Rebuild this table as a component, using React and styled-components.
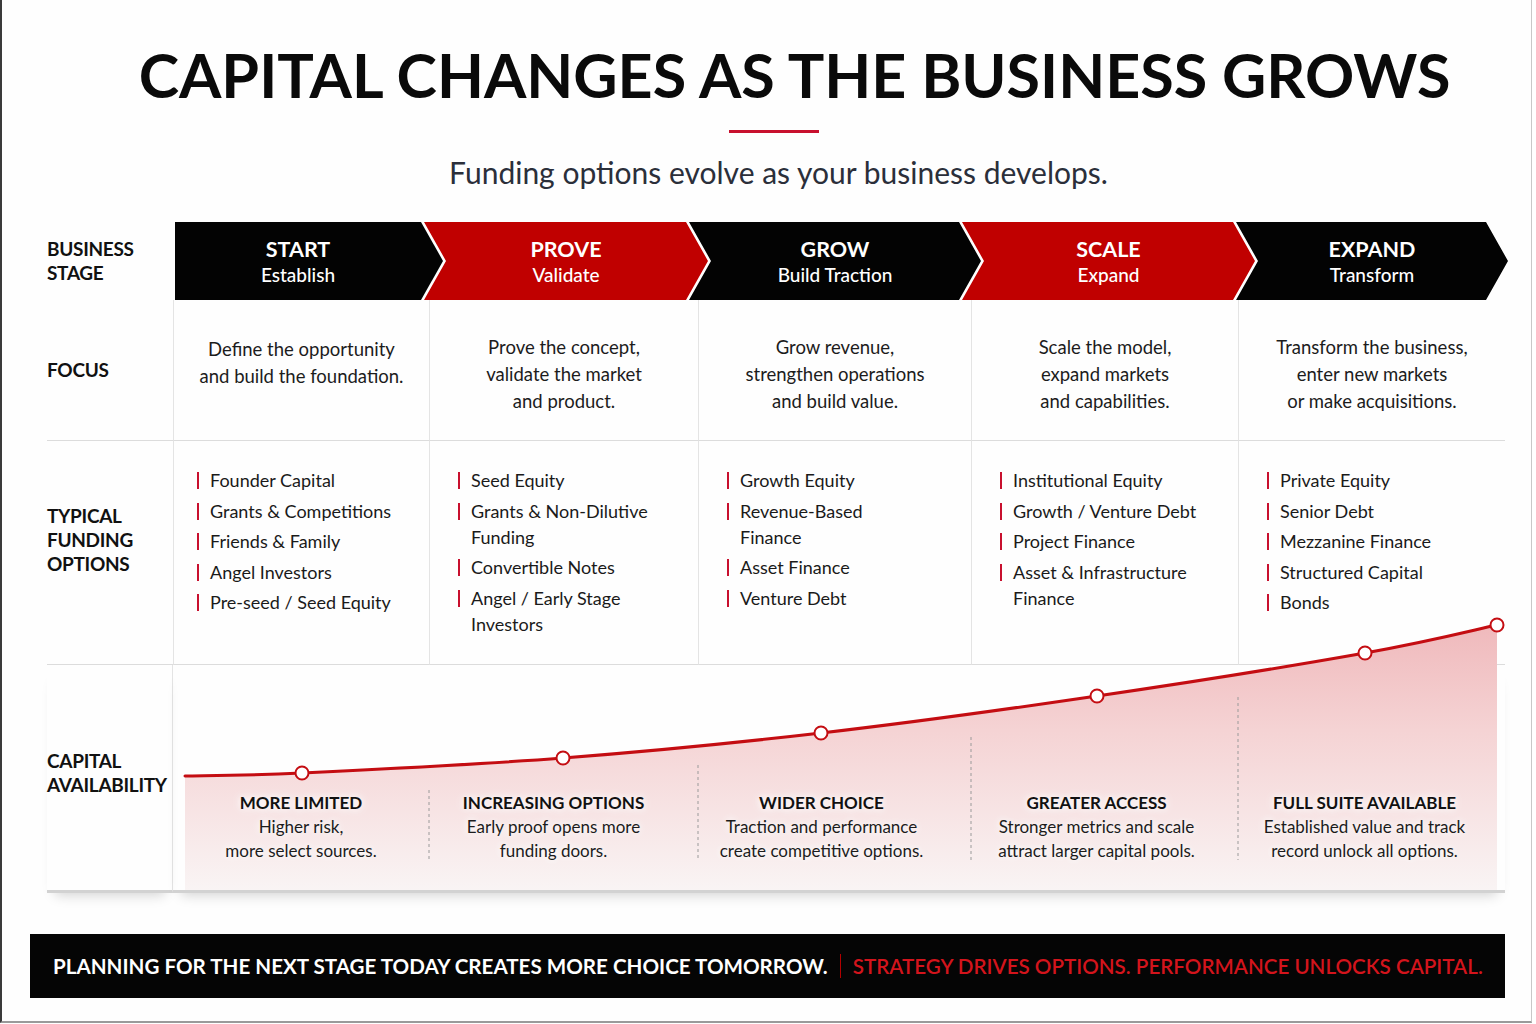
import React from 'react';
import styled, { createGlobalStyle } from 'styled-components';

const GlobalStyle = createGlobalStyle`
  html, body {
    margin: 0;
    padding: 0;
    background: #ffffff;
  }
  body {
    font-family: Lato, "Noto Sans", sans-serif;
    color: #111;
  }
`;

const RED = '#c8102e';

const Frame = styled.div`
  box-sizing: border-box;
  width: 1532px;
  height: 1023px;
  border-left: 2px solid #3a3a3a;
  border-right: 1px solid #c8c8c8;
  border-bottom: 2px solid #9a9a9a;
  background: #fefefe;
  padding-top: 38px;
  display: flex;
  flex-direction: column;
`;

const Header = styled.header`
  display: flex;
  flex-direction: column;
  align-items: center;
`;

const Title = styled.h1`
  margin: 0;
  padding-left: 56px;
  font-size: 61px;
  line-height: 73px;
  font-weight: 700;
  color: #0a0a0a;
  white-space: nowrap;
`;

const Rule = styled.div`
  width: 90px;
  height: 3px;
  background: ${RED};
  margin: 19px 0 0 14px;
`;

const Subtitle = styled.p`
  margin: 21px 0 0 24px;
  font-size: 30px;
  line-height: 36px;
  color: #2b2f3a;
`;

const Table = styled.div`
  display: grid;
  grid-template-columns: 126px 256px 269px 273px 267px 267px;
  grid-template-rows: 78px 141px 224px 228px;
  width: 1458px;
  margin: 32px 0 0 45px;
`;

const RowLabel = styled.div`
  box-sizing: border-box;
  display: flex;
  align-items: center;
  font-size: 19px;
  font-weight: 700;
  line-height: 24px;
  letter-spacing: -0.3px;
  color: #111;
  padding-bottom: ${(p) => p.$lift || 0}px;
  border-bottom: ${(p) => p.$line || 'none'};
  border-right: ${(p) => (p.$divider ? '1px solid #e4e4e4' : 'none')};
  box-shadow: ${(p) => (p.$shadow ? '0 10px 12px -8px rgba(0,0,0,0.18)' : 'none')};
`;

const StageStrip = styled.div`
  grid-column: 2 / -1;
  display: flex;
  padding-left: 2px;
`;

const Chevron = styled.div`
  box-sizing: border-box;
  flex: none;
  width: ${(p) => p.$w}px;
  margin-left: ${(p) => (p.$first ? 0 : -19)}px;
  padding: 0 22px 0 ${(p) => (p.$first ? 0 : 22)}px;
  background: ${(p) => (p.$red ? '#c00000' : '#030303')};
  clip-path: ${(p) =>
    p.$first
      ? 'polygon(0 0, calc(100% - 22px) 0, 100% 50%, calc(100% - 22px) 100%, 0 100%)'
      : 'polygon(0 0, calc(100% - 22px) 0, 100% 50%, calc(100% - 22px) 100%, 0 100%, 22px 50%)'};
  display: flex;
  flex-direction: column;
  align-items: center;
  justify-content: center;
  color: #fff;
`;

const StageName = styled.div`
  font-size: 21.5px;
  font-weight: 700;
  line-height: 26px;
`;

const StageSub = styled.div`
  font-size: 19px;
  font-weight: 500;
  line-height: 25px;
`;

const FocusCell = styled.div`
  box-sizing: border-box;
  display: flex;
  align-items: center;
  justify-content: center;
  text-align: center;
  font-size: 18.5px;
  line-height: 27px;
  color: #1c1c1c;
  padding: ${(p) => (p.$short ? '0 0 14px' : '8px 0 0')};
  border-left: 1px solid #e4e4e4;
  border-bottom: 1px solid #dcdcdc;
`;

const FundCell = styled.div`
  box-sizing: border-box;
  padding: 26px 0 0 ${(p) => (p.$first ? 23 : 28)}px;
  border-left: 1px solid #e4e4e4;
  border-bottom: 1px solid #dcdcdc;
  display: flex;
  flex-direction: column;
  gap: 4.5px;
`;

const FundItem = styled.div`
  display: flex;
  gap: 11px;
  font-size: 18px;
  line-height: 26px;
  color: #1a1a1a;
`;

const FundText = styled.span`
  max-width: 185px;
`;

const Tick = styled.span`
  flex: none;
  width: 2px;
  height: 17px;
  margin-top: 5px;
  background: ${RED};
`;

const ChartArea = styled.div`
  grid-column: 2 / -1;
  position: relative;
  border-bottom: 3px solid #d2d2d2;
  box-shadow: 0 10px 12px -8px rgba(0, 0, 0, 0.18);
`;

const ChartSvg = styled.svg`
  position: absolute;
  left: 0;
  bottom: 0;
  overflow: visible;
`;

const CaptionGrid = styled.div`
  box-sizing: border-box;
  position: relative;
  z-index: 1;
  height: 100%;
  display: grid;
  grid-template-columns: 256px 269px 273px 267px 267px;
  align-items: end;
  padding-bottom: 27px;
`;

const Caption = styled.div`
  box-sizing: border-box;
  text-align: center;
  padding-right: ${(p) => (p.$shift || 0) * 2}px;
  text-shadow: 0 0 6px #fff, 0 0 12px #fff;
`;

const CaptionTitle = styled.div`
  font-size: 17px;
  font-weight: 700;
  line-height: 25px;
  color: #111;
`;

const CaptionText = styled.div`
  font-size: 17px;
  line-height: 24px;
  color: #1c1c1c;
`;

const Footer = styled.footer`
  box-sizing: border-box;
  width: 1475px;
  height: 64px;
  margin: 41px 0 0 28px;
  padding-left: 23px;
  background: #050505;
  display: flex;
  align-items: center;
  gap: 12px;
  font-size: 20.6px;
  white-space: nowrap;
`;

const FooterLead = styled.span`
  color: #fff;
  font-weight: 700;
`;

const FooterSep = styled.span`
  width: 1px;
  height: 24px;
  background: #b30000;
`;

const FooterTail = styled.span`
  color: #d3141c;
  font-weight: 600;
`;

const stages = [
  { name: 'START', sub: 'Establish', w: 268 },
  { name: 'PROVE', sub: 'Validate', w: 284, red: true },
  { name: 'GROW', sub: 'Build Traction', w: 292 },
  { name: 'SCALE', sub: 'Expand', w: 293, red: true },
  { name: 'EXPAND', sub: 'Transform', w: 272 },
];

const focus = [
  ['Define the opportunity', 'and build the foundation.'],
  ['Prove the concept,', 'validate the market', 'and product.'],
  ['Grow revenue,', 'strengthen operations', 'and build value.'],
  ['Scale the model,', 'expand markets', 'and capabilities.'],
  ['Transform the business,', 'enter new markets', 'or make acquisitions.'],
];

const funding = [
  ['Founder Capital', 'Grants & Competitions', 'Friends & Family', 'Angel Investors', 'Pre-seed / Seed Equity'],
  ['Seed Equity', 'Grants & Non-Dilutive Funding', 'Convertible Notes', 'Angel / Early Stage Investors'],
  ['Growth Equity', 'Revenue-Based Finance', 'Asset Finance', 'Venture Debt'],
  ['Institutional Equity', 'Growth / Venture Debt', 'Project Finance', 'Asset & Infrastructure Finance'],
  ['Private Equity', 'Senior Debt', 'Mezzanine Finance', 'Structured Capital', 'Bonds'],
];

const captions = [
  { title: 'MORE LIMITED', lines: ['Higher risk,', 'more select sources.'], shift: 0 },
  { title: 'INCREASING OPTIONS', lines: ['Early proof opens more', 'funding doors.'], shift: 10 },
  { title: 'WIDER CHOICE', lines: ['Traction and performance', 'create competitive options.'], shift: 13 },
  { title: 'GREATER ACCESS', lines: ['Stronger metrics and scale', 'attract larger capital pools.'], shift: 8 },
  { title: 'FULL SUITE AVAILABLE', lines: ['Established value and track', 'record unlock all options.'], shift: 7 },
];

// curve points, relative to the chart area (x from column 2, y from 290px above its bottom)
const points = [
  [12, 176],
  [129, 173],
  [390, 158],
  [648, 133],
  [924, 96],
  [1192, 53],
  [1324, 25],
];

const dividers = [
  [256, 190],
  [525, 165],
  [798, 137],
  [1065, 97],
];

function smoothPath(p) {
  let d = `M ${p[0][0]} ${p[0][1]}`;
  for (let i = 0; i < p.length - 1; i++) {
    const p0 = p[i - 1] || p[i];
    const p1 = p[i];
    const p2 = p[i + 1];
    const p3 = p[i + 2] || p2;
    const c1x = p1[0] + (p2[0] - p0[0]) / 6;
    const c1y = p1[1] + (p2[1] - p0[1]) / 6;
    const c2x = p2[0] - (p3[0] - p1[0]) / 6;
    const c2y = p2[1] - (p3[1] - p1[1]) / 6;
    d += ` C ${c1x} ${c1y} ${c2x} ${c2y} ${p2[0]} ${p2[1]}`;
  }
  return d;
}

const CapitalChart = () => {
  const line = smoothPath(points);
  const last = points[points.length - 1];
  const area = `${line} L ${last[0]} 290 L ${points[0][0]} 290 Z`;

  return (
    <ChartSvg width="1332" height="290" viewBox="0 0 1332 290">
      <defs>
        <linearGradient id="capFill" x1="0" y1="0" x2="0" y2="290" gradientUnits="userSpaceOnUse">
          <stop offset="0" stopColor="#eeb3b6" />
          <stop offset="0.45" stopColor="#f5d3d4" />
          <stop offset="1" stopColor="#f9f4f4" />
        </linearGradient>
      </defs>
      <path d={area} fill="url(#capFill)" />
      {dividers.map(([x, y]) => (
        <line key={x} x1={x} y1={y} x2={x} y2={260} stroke="#9a9a9a" strokeWidth="1" strokeDasharray="3 3" />
      ))}
      <path d={line} fill="none" stroke="#c40d12" strokeWidth="3" strokeLinecap="round" />
      {points.slice(1).map(([x, y]) => (
        <circle key={x} cx={x} cy={y} r="6.5" fill="#fff" stroke="#c40d12" strokeWidth="2" />
      ))}
    </ChartSvg>
  );
};

const App = () => {
  return (
    <Frame>
      <GlobalStyle />
      <Header>
        <Title>CAPITAL CHANGES AS THE BUSINESS GROWS</Title>
        <Rule />
        <Subtitle>Funding options evolve as your business develops.</Subtitle>
      </Header>

      <Table>
        <RowLabel>
          BUSINESS
          <br />
          STAGE
        </RowLabel>
        <StageStrip>
          {stages.map((s, i) => (
            <Chevron key={s.name} $w={s.w} $red={s.red} $first={i === 0}>
              <StageName>{s.name}</StageName>
              <StageSub>{s.sub}</StageSub>
            </Chevron>
          ))}
        </StageStrip>

        <RowLabel $line="1px solid #dcdcdc">FOCUS</RowLabel>
        {focus.map((lines, i) => (
          <FocusCell key={i} $short={lines.length === 2}>
            <div>
              {lines.map((l) => (
                <div key={l}>{l}</div>
              ))}
            </div>
          </FocusCell>
        ))}

        <RowLabel $line="1px solid #dcdcdc" $lift={26}>
          TYPICAL
          <br />
          FUNDING
          <br />
          OPTIONS
        </RowLabel>
        {funding.map((items, i) => (
          <FundCell key={i} $first={i === 0}>
            {items.map((item) => (
              <FundItem key={item}>
                <Tick />
                <FundText>{item}</FundText>
              </FundItem>
            ))}
          </FundCell>
        ))}

        <RowLabel $line="3px solid #d2d2d2" $lift={10} $divider $shadow>
          CAPITAL
          <br />
          AVAILABILITY
        </RowLabel>
        <ChartArea>
          <CapitalChart />
          <CaptionGrid>
            {captions.map((c) => (
              <Caption key={c.title} $shift={c.shift}>
                <CaptionTitle>{c.title}</CaptionTitle>
                {c.lines.map((l) => (
                  <CaptionText key={l}>{l}</CaptionText>
                ))}
              </Caption>
            ))}
          </CaptionGrid>
        </ChartArea>
      </Table>

      <Footer>
        <FooterLead>PLANNING FOR THE NEXT STAGE TODAY CREATES MORE CHOICE TOMORROW.</FooterLead>
        <FooterSep />
        <FooterTail>STRATEGY DRIVES OPTIONS. PERFORMANCE UNLOCKS CAPITAL.</FooterTail>
      </Footer>
    </Frame>
  );
};

export default App;
